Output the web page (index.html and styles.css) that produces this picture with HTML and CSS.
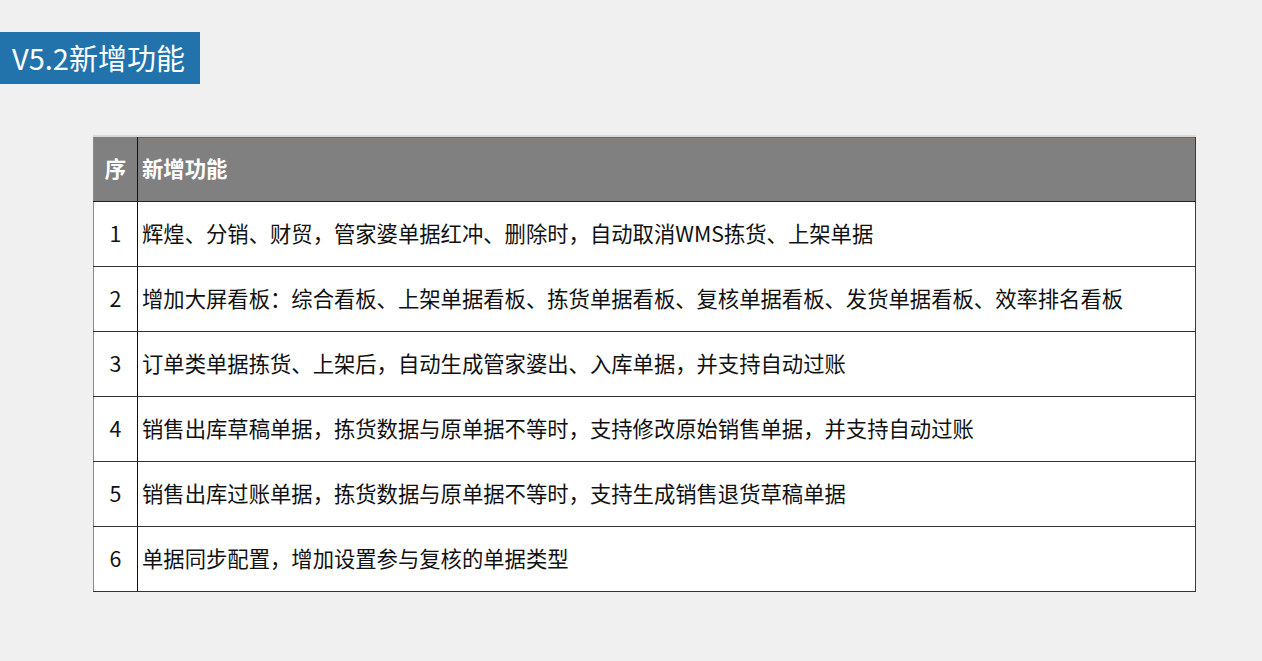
FILE: index.html
```html
<!DOCTYPE html>
<html lang="zh-CN">
<head>
<meta charset="utf-8">
<title>V5.2新增功能</title>
<link rel="stylesheet" href="styles.css">
</head>
<body>
<div class="page">
  <div class="title">V5.2新增功能</div>
  <table class="features">
    <thead>
      <tr><th class="num">序</th><th class="desc">新增功能</th></tr>
    </thead>
    <tbody>
      <tr><td class="num">1</td><td class="desc">辉煌、分销、财贸，管家婆单据红冲、删除时，自动取消WMS拣货、上架单据</td></tr>
      <tr><td class="num">2</td><td class="desc">增加大屏看板：综合看板、上架单据看板、拣货单据看板、复核单据看板、发货单据看板、效率排名看板</td></tr>
      <tr><td class="num">3</td><td class="desc">订单类单据拣货、上架后，自动生成管家婆出、入库单据，并支持自动过账</td></tr>
      <tr><td class="num">4</td><td class="desc">销售出库草稿单据，拣货数据与原单据不等时，支持修改原始销售单据，并支持自动过账</td></tr>
      <tr><td class="num">5</td><td class="desc">销售出库过账单据，拣货数据与原单据不等时，支持生成销售退货草稿单据</td></tr>
      <tr><td class="num">6</td><td class="desc">单据同步配置，增加设置参与复核的单据类型</td></tr>
    </tbody>
  </table>
</div>
</body>
</html>
```

FILE: styles.css
```css
html, body {
  margin: 0;
  padding: 0;
  background: #f0f0f0;
  font-family: "Noto Sans CJK SC", "Noto Sans", sans-serif;
}
.page {
  width: 1262px;
  height: 661px;
  padding-top: 32px;
  box-sizing: border-box;
}
.title {
  width: 200px;
  height: 52px;
  background: #2272ab;
  color: #ffffff;
  font-size: 29px;
  line-height: 50px;
  padding-left: 12px;
  padding-bottom: 2px;
  box-sizing: border-box;
  white-space: nowrap;
}
.features {
  margin: 51px 0 0 93px;
  width: 1103px;
  border-collapse: collapse;
  background: #ffffff;
  border-top: 2px solid #d8d8d8;
  border-left: 1px solid #8a8a8a;
  border-right: 1px solid #3a3a3a;
}
.features th,
.features td {
  padding: 0 0 4px 0;
  font-size: 21.33px;
  text-align: left;
  vertical-align: middle;
  white-space: nowrap;
}
.features th {
  background: #808080;
  color: #ffffff;
  font-weight: 700;
  height: 60px;
  border-bottom: 1px solid #222;
}
.features th.desc {
  box-shadow: inset 0 1px 0 #2e8a55;
}
.features td {
  color: #111;
  height: 60px;
  border-bottom: 1px solid #333;
}
.features .num {
  width: 43px;
  text-align: center;
  border-right: 1px solid #111;
}
.features .desc {
  padding-left: 4px;
}
```
